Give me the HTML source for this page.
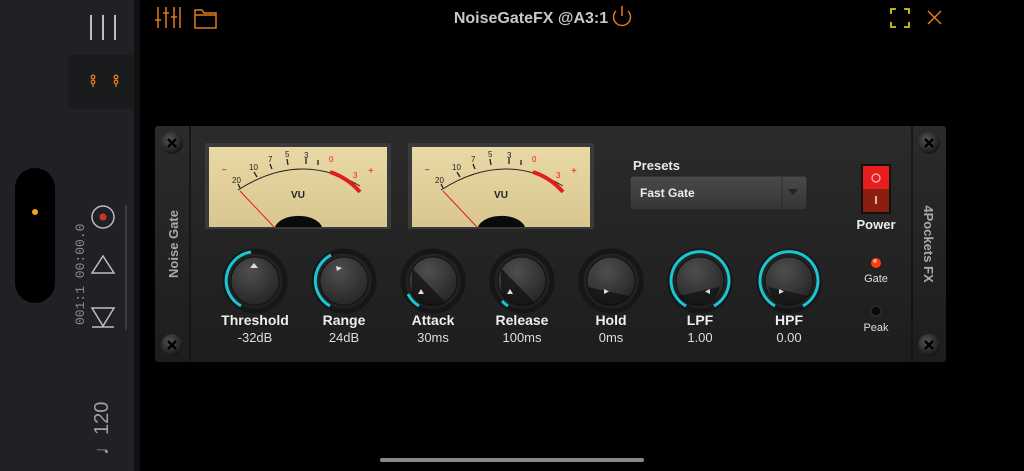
<!DOCTYPE html>
<html><head><meta charset="utf-8"><style>
html,body{margin:0;padding:0;width:1024px;height:471px;overflow:hidden;background:#000;font-family:"Liberation Sans",sans-serif}
svg{display:block}
</style></head><body>
<svg width="1024" height="471" viewBox="0 0 1024 471" xmlns="http://www.w3.org/2000/svg" font-family="Liberation Sans, sans-serif">
<defs>
<linearGradient id="pan" x1="0" y1="0" x2="0" y2="1"><stop offset="0" stop-color="#2b2b2c"/><stop offset="1" stop-color="#1d1d1e"/></linearGradient>
<radialGradient id="knob" cx="0.4" cy="0.3" r="0.8"><stop offset="0" stop-color="#4e4e4e"/><stop offset="1" stop-color="#222"/></radialGradient>
<radialGradient id="scr" cx="0.4" cy="0.35" r="0.7"><stop offset="0" stop-color="#555"/><stop offset="1" stop-color="#111"/></radialGradient>
<linearGradient id="vu" x1="0" y1="0" x2="0" y2="1"><stop offset="0" stop-color="#e9d9a6"/><stop offset="1" stop-color="#d9c68f"/></linearGradient>
<linearGradient id="dd" x1="0" y1="0" x2="0" y2="1"><stop offset="0" stop-color="#4a4a4b"/><stop offset="1" stop-color="#353536"/></linearGradient>
</defs>
<rect x="0" y="0" width="134" height="471" fill="#1f2124"/>
<rect x="134" y="0" width="6" height="471" fill="#111214"/>
<g stroke="#bdbdbd" stroke-width="2"><line x1="91" y1="15" x2="91" y2="40"/><line x1="103" y1="15" x2="103" y2="40"/><line x1="115" y1="15" x2="115" y2="40"/></g>
<rect x="68" y="55" width="66" height="54" fill="#191b1d"/>
<g fill="none" stroke="#e07a1c" stroke-width="1.3"><circle cx="93" cy="77" r="1.8"/><circle cx="93" cy="82" r="1.8"/><line x1="93" y1="84" x2="93" y2="87"/><circle cx="116" cy="77" r="1.8"/><circle cx="116" cy="82" r="1.8"/><line x1="116" y1="84" x2="116" y2="87"/></g>
<rect x="15" y="168" width="40" height="135" rx="20" fill="#000"/>
<circle cx="35" cy="212" r="3" fill="#f7a21b"/>
<g transform="translate(84,325) rotate(-90)" fill="#8a8a8a" font-family="Liberation Mono, monospace" font-size="13"><text x="0" y="0">001:1  00:00.0</text></g>
<circle cx="103" cy="217" r="11" fill="none" stroke="#bdbdbd" stroke-width="1.5"/><circle cx="103" cy="217" r="3.5" fill="#d0342c"/>
<path d="M92 273 L103 256 L114 273 Z" fill="none" stroke="#bdbdbd" stroke-width="1.5"/>
<path d="M92 308 L114 308 L103 326 Z M92 327 L114 327" fill="none" stroke="#bdbdbd" stroke-width="1.5"/>
<line x1="126" y1="205" x2="126" y2="330" stroke="#555" stroke-width="1"/>
<g transform="translate(108,455) rotate(-90)" fill="#a0a0a0" font-size="20"><text x="0" y="0">♩120</text></g>
<g stroke="#e07a1c" stroke-width="1.5" fill="none">
<line x1="158" y1="7" x2="158" y2="28"/><line x1="166" y1="7" x2="166" y2="28"/><line x1="174" y1="7" x2="174" y2="28"/><line x1="180" y1="7" x2="180" y2="28"/>
<line x1="155" y1="20" x2="161" y2="20"/><line x1="163" y1="13" x2="169" y2="13"/><line x1="171" y1="17" x2="177" y2="17"/>
<path d="M195 10 h7 l2 3 h12 v15 h-21 z M195 15 h21"/>
</g>
<text x="531" y="23" fill="#c8c8c8" font-size="16" text-anchor="middle" font-weight="bold">NoiseGateFX @A3:1</text>
<path d="M616 11 A8.5 8.5 0 1 0 628 11 M622 6 v10" fill="none" stroke="#e07a1c" stroke-width="1.5"/>
<path d="M891 14 v-5 h5 M904 9 h5 v5 M909 22 v5 h-5 M896 27 h-5 v-5" fill="none" stroke="#d7c800" stroke-width="1.8"/>
<path d="M928 11 l13 13 M941 11 l-13 13" stroke="#e07a1c" stroke-width="1.5"/>
<rect x="380" y="458" width="264" height="4" rx="2" fill="#8a8a8a"/>
<rect x="155" y="126" width="791" height="236" rx="3" fill="url(#pan)"/>
<line x1="190" y1="126" x2="190" y2="362" stroke="#111" stroke-width="1.5"/>
<line x1="912" y1="126" x2="912" y2="362" stroke="#111" stroke-width="1.5"/>
<g>
<circle cx="172" cy="143" r="11" fill="url(#scr)"/><circle cx="172" cy="345" r="11" fill="url(#scr)"/>
<circle cx="929" cy="143" r="11" fill="url(#scr)"/><circle cx="929" cy="345" r="11" fill="url(#scr)"/>
<g stroke="#000" stroke-width="2.5"><path d="M168 139 l8 8 M176 139 l-8 8 M168 341 l8 8 M176 341 l-8 8 M925 139 l8 8 M933 139 l-8 8 M925 341 l8 8 M933 341 l-8 8"/></g>
</g>
<g transform="translate(178,244) rotate(-90)" fill="#aaa" font-size="13" font-weight="bold"><text x="0" y="0" text-anchor="middle">Noise Gate</text></g>
<g transform="translate(924,244) rotate(90)" fill="#aaa" font-size="13" font-weight="bold"><text x="0" y="0" text-anchor="middle">4Pockets FX</text></g>
<g id="vu1">
<rect x="205" y="143" width="186" height="86" rx="2" fill="#3a3a3a"/>
<rect x="209" y="147" width="178" height="80" fill="url(#vu)"/>
<path d="M238 190 Q300 150 360 186" fill="none" stroke="#222" stroke-width="1"/>
<path d="M330 172 Q348 178 360 192" fill="none" stroke="#e21d1d" stroke-width="4"/>
<g stroke="#222" stroke-width="1.3"><line x1="240" y1="188" x2="238" y2="184"/><line x1="257" y1="177" x2="254" y2="172"/><line x1="272" y1="169" x2="270" y2="164"/><line x1="288" y1="165" x2="287" y2="159"/><line x1="306" y1="164" x2="306" y2="158"/><line x1="318" y1="165" x2="318" y2="160"/></g>
<g font-size="8" fill="#222"><text x="222" y="172">–</text><text x="232" y="183">20</text><text x="249" y="170">10</text><text x="268" y="162">7</text><text x="285" y="157">5</text><text x="304" y="158">3</text><text x="329" y="162" fill="#e21d1d">0</text><text x="353" y="178" fill="#e21d1d">3</text><text x="368" y="174" fill="#e21d1d" font-size="10">+</text></g>
<text x="298" y="198" font-size="10" font-weight="bold" fill="#222" text-anchor="middle">VU</text>
<line x1="240" y1="191" x2="274" y2="227" stroke="#e21d1d" stroke-width="1"/>
<path d="M275 227 A24 14 0 0 1 322 227 Z" fill="#0a0a0a"/>
</g>
<use href="#vu1" transform="translate(203,0)"/>
<text x="633" y="170" fill="#e8e8e8" font-size="13" font-weight="bold">Presets</text>
<rect x="630" y="176" width="177" height="34" rx="3" fill="url(#dd)" stroke="#222"/>
<line x1="782" y1="177" x2="782" y2="209" stroke="#2a2a2a"/>
<text x="640" y="197" fill="#eee" font-size="12" font-weight="bold">Fast Gate</text>
<path d="M788 189 h10 l-5 6 z" fill="#222"/>
<rect x="861" y="164" width="30" height="50" fill="#111"/>
<rect x="863" y="166" width="26" height="23" fill="#e81e1e"/>
<rect x="863" y="189" width="26" height="23" fill="#8a1e10"/>
<circle cx="876" cy="178" r="4" fill="none" stroke="#ffbbbb" stroke-width="1.2"/>
<line x1="876" y1="196" x2="876" y2="204" stroke="#e8b0a0" stroke-width="2"/>
<text x="876" y="229" fill="#eee" font-size="13" font-weight="bold" text-anchor="middle">Power</text>
<circle cx="876" cy="263" r="5" fill="#ff3a12"/><circle cx="875" cy="261" r="2" fill="#ff9a7a"/>
<text x="876" y="282" fill="#ddd" font-size="11" text-anchor="middle">Gate</text>
<circle cx="876" cy="311" r="5" fill="#0a0a0a" stroke="#333"/>
<text x="876" y="331" fill="#ddd" font-size="11" text-anchor="middle">Peak</text>
<g fill="none" stroke-width="3" stroke="#19c6d1">
<circle cx="255" cy="281" r="30" stroke="#161616" stroke-width="5"/>
<circle cx="344" cy="281" r="30" stroke="#161616" stroke-width="5"/>
<circle cx="433" cy="281" r="30" stroke="#161616" stroke-width="5"/>
<circle cx="522" cy="281" r="30" stroke="#161616" stroke-width="5"/>
<circle cx="611" cy="281" r="30" stroke="#161616" stroke-width="5"/>
<circle cx="700" cy="281" r="30" stroke="#161616" stroke-width="5"/>
<circle cx="789" cy="281" r="30" stroke="#161616" stroke-width="5"/>
<path d="M241 306 A29 29 0 0 1 251 252"/>
<path d="M330 306 A29 29 0 0 1 331 255"/>
<path d="M419 306 A29 29 0 0 1 408 294"/>
<path d="M508 306 A29 29 0 0 1 502 301"/>
<path d="M686 306 A29 29 0 1 1 714 306"/>
<path d="M775 306 A29 29 0 1 1 803 306"/>
</g>
<g>
<circle cx="255" cy="281" r="24" fill="url(#knob)" stroke="#111"/>
<circle cx="344" cy="281" r="24" fill="url(#knob)" stroke="#111"/>
<circle cx="433" cy="281" r="24" fill="url(#knob)" stroke="#111"/>
<circle cx="522" cy="281" r="24" fill="url(#knob)" stroke="#111"/>
<circle cx="611" cy="281" r="24" fill="url(#knob)" stroke="#111"/>
<circle cx="700" cy="281" r="24" fill="url(#knob)" stroke="#111"/>
<circle cx="789" cy="281" r="24" fill="url(#knob)" stroke="#111"/>
<g fill="#0f0f0f" opacity="0.7">
<path d="M412 268 L446 303 A24 24 0 0 1 412 293 Z"/>
<path d="M501 268 L535 303 A24 24 0 0 1 501 293 Z"/>
<path d="M588 287 L630 296 A24 24 0 0 1 592 297 Z"/>
<path d="M720 287 L678 296 A24 24 0 0 0 716 297 Z"/>
<path d="M768 287 L808 296 A24 24 0 0 1 772 297 Z"/>
</g>
<g fill="#ddd"><path d="M250 268 l4 -5 l4 5 z"/><path d="M336 266 l6 2 l-5 3 z"/><path d="M418 294 l3 -5 l3 5z"/><path d="M507 294 l3 -5 l3 5z"/><path d="M604 294 v-5 l5 2.5z"/><path d="M710 294 v-5 l-5 2.5z"/><path d="M779 294 v-5 l5 2.5z"/></g>
</g>
<g fill="#eee" font-size="14" font-weight="bold" text-anchor="middle">
<text x="255" y="325">Threshold</text><text x="344" y="325">Range</text><text x="433" y="325">Attack</text><text x="522" y="325">Release</text><text x="611" y="325">Hold</text><text x="700" y="325">LPF</text><text x="789" y="325">HPF</text>
</g>
<g fill="#ddd" font-size="13" text-anchor="middle">
<text x="255" y="342">-32dB</text><text x="344" y="342">24dB</text><text x="433" y="342">30ms</text><text x="522" y="342">100ms</text><text x="611" y="342">0ms</text><text x="700" y="342">1.00</text><text x="789" y="342">0.00</text>
</g>
</svg>
</body></html>
